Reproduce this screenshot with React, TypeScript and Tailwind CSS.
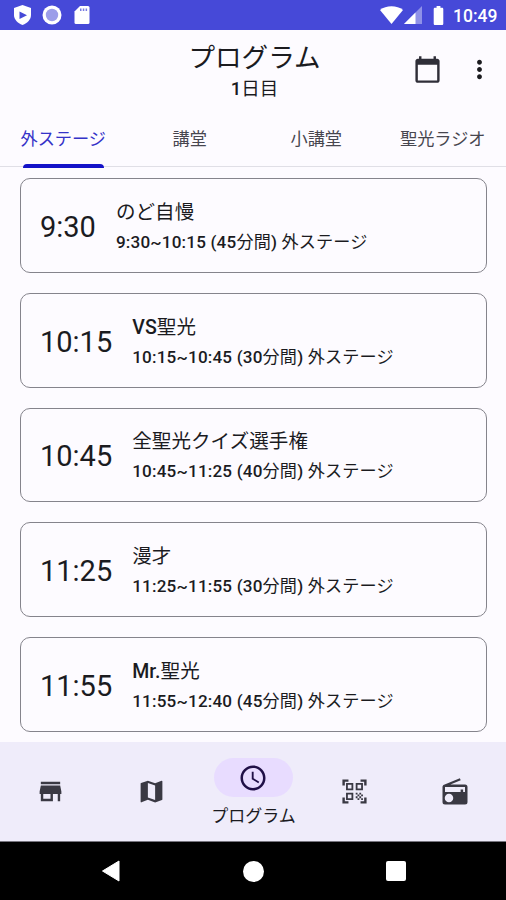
import React from 'react';
import {
  MdStore,
  MdMap,
  MdSchedule,
  MdQrCodeScanner,
  MdCalendarToday,
  MdMoreVert,
  MdBatteryFull,
} from 'react-icons/md';

interface Program {
  start: string;
  title: string;
  detail: string;
}

const tabs = ['外ステージ', '講堂', '小講堂', '聖光ラジオ'];

const programs: Program[] = [
  { start: '9:30', title: 'のど自慢', detail: '9:30~10:15 (45分間) 外ステージ' },
  { start: '10:15', title: 'VS聖光', detail: '10:15~10:45 (30分間) 外ステージ' },
  { start: '10:45', title: '全聖光クイズ選手権', detail: '10:45~11:25 (40分間) 外ステージ' },
  { start: '11:25', title: '漫才', detail: '11:25~11:55 (30分間) 外ステージ' },
  { start: '11:55', title: 'Mr.聖光', detail: '11:55~12:40 (45分間) 外ステージ' },
];

// Latin characters are medium weight, Japanese characters stay regular
const MixedText: React.FC<{ text: string }> = ({ text }) => (
  <>
    {text.split(/([\x20-\x7e]+)/).map((part, i) =>
      i % 2 === 1 ? <span key={i} className="font-medium">{part}</span> : part
    )}
  </>
);

const RadioIcon: React.FC<{ className?: string }> = ({ className }) => (
  <svg className={className} viewBox="0 0 24 24" fill="currentColor">
    <path
      fillRule="evenodd"
      d="M3.240 6.150C2.510 6.430 2 7.170 2 8v12a2 2 0 0 0 2 2h16a2 2 0 0 0 2-2V8a2 2 0 0 0-2-2H8.300l8.260-3.340L15.880 1zM7.200 20.200a3.400 3.400 0 1 1 0-6.800 3.400 3.400 0 0 1 0 6.800zM20 12h-1.500v-2h-2v2H4V8h16z"
    />
  </svg>
);

const StatusBar: React.FC = () => (
  <div className="h-[30px] shrink-0 bg-[#4649d8] text-white flex items-center justify-between pl-[13px] pr-[9px]">
    <div className="flex items-center">
      <svg className="w-[19px] h-5" viewBox="0 0 19 20">
        <path d="M9.500 0 18 3v7c0 4.500-3.500 8-8.500 10C4.500 18 1 14.500 1 10V3z" fill="#fff" />
        <path d="M6.500 6.500v7.500l7.500-3.700z" fill="#4649d8" />
      </svg>
      <svg className="w-5 h-5 ml-[10px]" viewBox="0 0 20 20">
        <circle cx="10" cy="10" r="9.500" fill="#fff" />
        <circle cx="10" cy="10" r="6.200" fill="#9c9ee9" />
      </svg>
      <svg className="w-4 h-5 ml-3" viewBox="0 0 16 20">
        <path d="M6 1h8q1.500 0 1.500 1.500v15q0 1.500-1.500 1.500H2q-1.500 0-1.500-1.500V6.500z" fill="#fff" />
        <path d="M6 3.500h1.500V6H6zM8.800 3.500h1.500V6H8.800zM11.600 3.500h1.500V6h-1.500z" fill="#7a7ce2" />
      </svg>
    </div>
    <div className="flex items-center">
      <svg className="w-[23px] h-[18px]" viewBox="0 0 23 18">
        <path d="M0 4C6-1 17-1 23 4L11.500 18z" fill="#fff" />
      </svg>
      <svg className="w-[18px] h-[18px] ml-px" viewBox="0 0 18 18">
        <path d="M18 0v18H0z" fill="#8f91e8" />
        <path d="M11.500 6.500V18H0z" fill="#fff" />
      </svg>
      <MdBatteryFull className="w-[23px] h-[23px] ml-[5px]" />
      <span className="ml-[3px] pt-0.5 w-[44px] text-[17.500px] leading-5 font-medium whitespace-nowrap">10:49</span>
    </div>
  </div>
);

const Header: React.FC = () => (
  <header className="h-[80px] shrink-0 grid grid-cols-[1fr_150px_1fr] items-center pl-[3px]">
    <div />
    <div className="text-center text-[#1b1b1f] pt-[3px]">
      <h1 className="text-[26.600px] leading-[34px] whitespace-nowrap">プログラム</h1>
      <p className="text-[18.500px] leading-7"><MixedText text="1日目" /></p>
    </div>
    <div className="flex items-center justify-end pr-3 -mt-0.5 text-[#2f2e38]">
      <MdCalendarToday className="w-[29px] h-[29px]" />
      <MdMoreVert className="w-[29px] h-[29px] ml-[23px] text-[#1b1b1f]" />
    </div>
  </header>
);

const TabBar: React.FC = () => (
  <div className="h-[57px] shrink-0 grid grid-cols-4 border-b border-[#e0dfe6]">
    {tabs.map((tab, i) => (
      <div key={tab} className="flex flex-col items-center">
        <span
          className={`h-[54px] pt-[5px] flex items-center text-[17.200px] whitespace-nowrap ${
            i === 0 ? 'text-[#3432c8]' : 'text-[#47464f]'
          }`}
        >
          {tab}
        </span>
        {i === 0 && <div className="w-[81px] h-1 -mb-1 rounded-t-full bg-[#1412c8]" />}
      </div>
    ))}
  </div>
);

const ProgramCard: React.FC<{ program: Program }> = ({ program }) => (
  <div className="h-[94.800px] shrink-0 flex items-center border border-[#85848c] rounded-[10px] px-[19px] text-[#1b1b1f]">
    <span className="text-[29px] leading-9 pt-[3px]">{program.start}</span>
    <div className="ml-5 pt-0.5">
      <p className="text-[19.500px] leading-[31px] tracking-[0.1px] whitespace-nowrap">
        <MixedText text={program.title} />
      </p>
      <p className="text-[17.100px] leading-[28px] tracking-[0.180px] whitespace-nowrap">
        <MixedText text={program.detail} />
      </p>
    </div>
  </div>
);

const BottomNav: React.FC = () => (
  <nav className="h-[100px] shrink-0 bg-[#efecfa] grid grid-cols-5 items-center text-[#3a3943] border-b border-[#77757f]">
    <MdStore className="w-[29px] h-[29px] justify-self-center" />
    <MdMap className="w-[29px] h-[29px] justify-self-center" />
    <div className="flex flex-col items-center justify-self-center pt-1.5 pl-px">
      <div className="w-[79px] h-[39px] rounded-full bg-[#e8dcff] flex items-center justify-center">
        <MdSchedule className="w-[30px] h-[30px] text-[#201047]" />
      </div>
      <span className="mt-1 text-[17px] leading-[30px] text-[#1b1b1f] whitespace-nowrap">プログラム</span>
    </div>
    <MdQrCodeScanner className="w-[29px] h-[29px] justify-self-center" />
    <RadioIcon className="w-[30px] h-[30px] justify-self-center" />
  </nav>
);

const SystemNav: React.FC = () => (
  <div className="h-[58px] shrink-0 bg-black flex items-center justify-between pl-[101px] pr-[100px]">
    <svg className="w-[19px] h-[22px]" viewBox="0 0 19 22">
      <path d="M18 1v20L1.500 11z" fill="#fff" stroke="#fff" strokeLinejoin="round" />
    </svg>
    <div className="w-[21px] h-[21px] rounded-full bg-white" />
    <div className="w-5 h-5 rounded-[2px] bg-white" />
  </div>
);

const App: React.FC = () => {
  return (
    <div className="w-[506px] h-[900px] overflow-hidden flex flex-col bg-[#fdfbff] font-['Roboto','Noto_Sans_CJK_JP',sans-serif]">
      <StatusBar />
      <Header />
      <TabBar />
      <main className="flex-1 min-h-0 overflow-hidden flex flex-col gap-5 pl-5 pr-[19px] pt-[11px]">
        {programs.map((program) => (
          <ProgramCard key={program.start} program={program} />
        ))}
      </main>
      <BottomNav />
      <SystemNav />
    </div>
  );
};

export default App;
